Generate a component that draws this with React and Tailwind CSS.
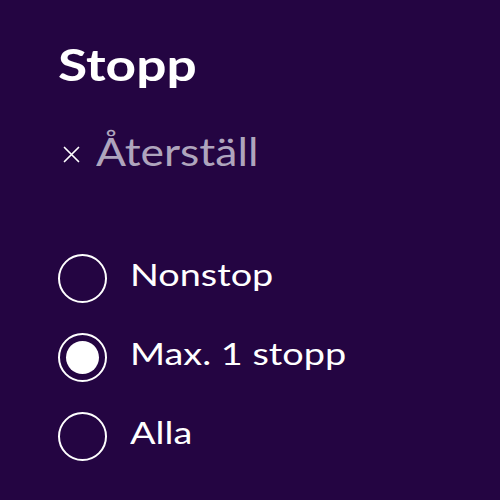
import React from "react";

function Radio({ checked, label }) {
  return (
    <div className="flex items-center h-[79px]">
      <div className="w-[49px] h-[49px] rounded-full border-2 border-white flex items-center justify-center shrink-0">
        {checked && <div className="w-[33px] h-[33px] rounded-full bg-white" />}
      </div>
      <span className="ml-[23px] mb-[8px] text-[31px] leading-none text-white scale-x-[1.22] origin-left whitespace-nowrap">
        {label}
      </span>
    </div>
  );
}

export default function App() {
  return (
    <div
      className="w-[500px] h-[500px] bg-[#240542] pl-[58px] pt-[42px] overflow-hidden"
      style={{ fontFamily: "Lato, 'Noto Sans', sans-serif" }}
    >
      <h1 className="text-[44px] font-bold text-white leading-none scale-x-[1.21] origin-left">Stopp</h1>
      <div className="mt-[46px] flex items-start h-[38px]">
        <svg width="17" height="17" viewBox="0 0 17 17" className="ml-[5px] mt-[14px] shrink-0">
          <path d="M1.5 1.5 L15.5 15.5 M15.5 1.5 L1.5 15.5" stroke="#ffffff" strokeWidth="1.7" strokeLinecap="round" />
        </svg>
        <span className="ml-[16px] text-[38px] leading-none text-[#afa5bd] scale-x-[1.17] origin-left whitespace-nowrap">
          Återställ
        </span>
      </div>
      <div className="mt-[69px] flex flex-col">
        <Radio label="Nonstop" />
        <Radio label="Max. 1 stopp" checked />
        <Radio label="Alla" />
      </div>
    </div>
  );
}
